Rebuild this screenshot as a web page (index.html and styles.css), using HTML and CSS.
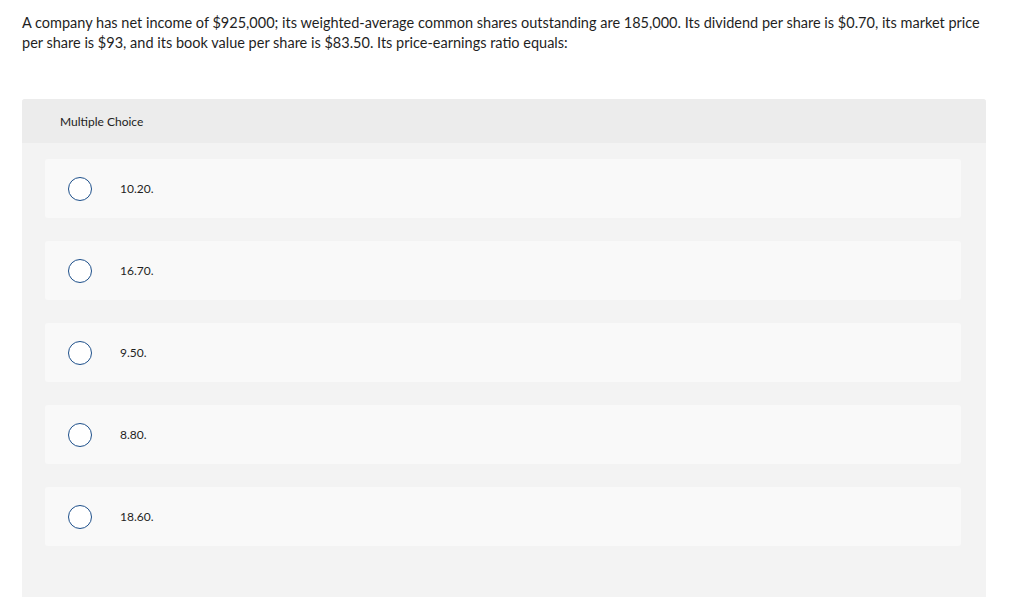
FILE: index.html
```html
<!DOCTYPE html>
<html>
<head>
<meta charset="utf-8">
<link rel="stylesheet" href="styles.css">
</head>
<body>
<div class="page">
  <p class="question">A company has net income of $925,000; its weighted-average common shares outstanding are 185,000. Its dividend per share is $0.70, its market price per share is $93, and its book value per share is $83.50. Its price-earnings ratio equals:</p>
  <section class="panel">
    <header class="panel-head">Multiple Choice</header>
    <ul class="options">
      <li class="option"><span class="radio"></span><span class="label">10.20.</span></li>
      <li class="option"><span class="radio"></span><span class="label">16.70.</span></li>
      <li class="option"><span class="radio"></span><span class="label">9.50.</span></li>
      <li class="option"><span class="radio"></span><span class="label">8.80.</span></li>
      <li class="option"><span class="radio"></span><span class="label">18.60.</span></li>
    </ul>
  </section>
</div>
</body>
</html>
```

FILE: styles.css
```css
html, body {
  margin: 0;
  padding: 0;
  background: #ffffff;
  font-family: "Lato", "Open Sans", sans-serif;
  color: #222222;
  overflow: hidden;
}
.page {
  padding: 13px 38px 0 22px;
}
.question {
  margin: 0;
  font-size: 14.5px;
  line-height: 20px;
  color: #1f1f1f;
}
.panel {
  margin-top: 46px;
  width: 964px;
  background: #f3f3f3;
  border-radius: 3px 3px 0 0;
  min-height: 520px;
}
.panel-head {
  background: #ececec;
  height: 44px;
  display: flex;
  align-items: center;
  padding-left: 38px;
  font-size: 12px;
  color: #222;
  border-radius: 3px 3px 0 0;
}
.options {
  list-style: none;
  margin: 0;
  padding: 16px 25px 0 23px;
  display: flex;
  flex-direction: column;
  gap: 23px;
}
.option {
  height: 59px;
  background: #f9f9f9;
  border-radius: 3px;
  display: flex;
  align-items: center;
  padding-left: 23px;
}
.radio {
  width: 22px;
  height: 22px;
  border: 1.5px solid #1d4f8a;
  border-radius: 50%;
  background: #fff;
  flex: none;
}
.label {
  margin-left: 28px;
  font-size: 12px;
  color: #1f1f1f;
}
```
